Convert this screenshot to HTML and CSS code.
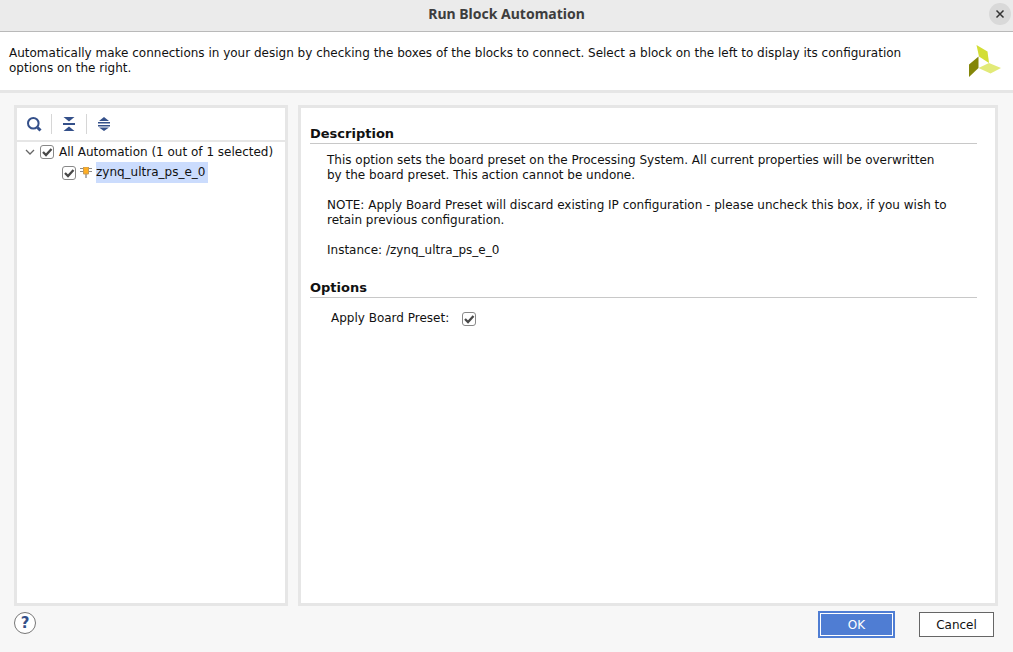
FILE: index.html
```html
<!DOCTYPE html>
<html lang="en">
<head>
<meta charset="utf-8">
<title>Run Block Automation</title>
<link rel="stylesheet" href="styles.css">
</head>
<body>
<div class="dialog">
  <header class="titlebar">
    <h1 class="title">Run Block Automation</h1>
    <button class="close" type="button" aria-label="Close">
      <svg width="10" height="10" viewBox="0 0 10 10"><path d="M1.5 1.5 8.5 8.5M8.5 1.5 1.5 8.5" fill="none" stroke="#333" stroke-width="1.5"/></svg>
    </button>
  </header>
  <section class="intro">
    <p class="intro-text">Automatically make connections in your design by checking the boxes of the blocks to connect. Select a block on the left to display its configuration options on the right.</p>
    <svg class="logo" width="32" height="32" viewBox="0 0 32 32" aria-hidden="true">
      <path d="M7.500 0 18.500 6.500 20 18 10 11.500Z" fill="#d3de35"/>
      <path d="M9.500 11.500V23L0 32V19.500Z" fill="#848609"/>
      <path d="M9.500 23 20 18 32 23 21.500 28.500Z" fill="#e2ea78"/>
    </svg>
  </section>
  <main class="content">
    <aside class="panel tree-panel">
      <div class="toolbar">
        <button class="tool" type="button" aria-label="Search">
          <svg width="16" height="16" viewBox="0 0 16 16"><circle cx="7.300" cy="7.300" r="5.300" fill="none" stroke="#34508a" stroke-width="2"/><path d="M11.500 11.500 14.500 14.500" stroke="#34508a" stroke-width="3"/></svg>
        </button>
        <button class="tool" type="button" aria-label="Collapse all">
          <svg width="16" height="16" viewBox="0 0 16 16"><path d="M2.500 1H13.500L8 5.500ZM2 7H14V9H2ZM8 10.500 13.500 15H2.500Z" fill="#34508a"/></svg>
        </button>
        <button class="tool" type="button" aria-label="Expand all">
          <svg width="16" height="16" viewBox="0 0 16 16"><path d="M8 1 13 5H3ZM2 6H14V7.500H2ZM2 9H14V10.500H2ZM3 11.500H13L8 15Z" fill="#34508a"/></svg>
        </button>
      </div>
      <div class="tree">
        <div class="node">
          <svg class="chevron" width="10" height="8" viewBox="0 0 10 8"><path d="M1 2 5 6 9 2" fill="none" stroke="#666" stroke-width="1.300"/></svg>
          <input class="check" type="checkbox" id="all" checked>
          <label for="all">All Automation (1 out of 1 selected)</label>
        </div>
        <div class="node child">
          <input class="check" type="checkbox" id="zynq" checked>
          <svg class="block" width="12" height="12" viewBox="0 0 12 12"><path d="M0 1.500H12M0 4.500H12" stroke="#8c8c8c" stroke-width="1" fill="none"/><path d="M6 7V11" stroke="#b0b0b0" stroke-width="2"/><path d="M3.500 0H8.500V7H3.500Z" fill="#ffae22" stroke="#c99b52" stroke-width="1"/></svg>
          <label class="selected" for="zynq">zynq_ultra_ps_e_0</label>
        </div>
      </div>
    </aside>
    <section class="panel detail">
      <h2 class="heading">Description</h2>
      <div class="description">
        <p>This option sets the board preset on the Processing System. All current properties will be overwritten by the board preset. This action cannot be undone.</p>
        <p>NOTE: Apply Board Preset will discard existing IP configuration - please uncheck this box, if you wish to retain previous configuration.</p>
        <p>Instance: /zynq_ultra_ps_e_0</p>
      </div>
      <h2 class="heading">Options</h2>
      <div class="option">
        <label for="preset">Apply Board Preset:</label>
        <input class="check" type="checkbox" id="preset" checked>
      </div>
    </section>
  </main>
  <footer class="footer">
    <button class="help" type="button" aria-label="Help">?</button>
    <div class="actions">
      <button class="btn primary" type="button">OK</button>
      <button class="btn" type="button">Cancel</button>
    </div>
  </footer>
</div>
</body>
</html>
```
FILE: styles.css
```css
* { box-sizing: border-box; }
body {
  margin: 0;
  background: #f7f7f7;
  color: #111;
  font: 12px/15px "DejaVu Sans", sans-serif;
}
h1, h2, p { margin: 0; }
button { font: inherit; color: inherit; padding: 0; cursor: pointer; }
svg { display: block; flex: none; }

.dialog { display: flex; flex-direction: column; min-height: 100vh; }

.titlebar {
  display: grid;
  grid-template-columns: 1fr auto 1fr;
  align-items: center;
  height: 32px;
  padding: 0 2px 4px;
  background: #ebebeb;
  border-bottom: 1px solid #b9b9b9;
}
.title {
  grid-column: 2;
  color: #3d3d3d;
  font: bold 14px/20px "Noto Sans", sans-serif;
}
.close {
  display: grid;
  place-items: center;
  justify-self: end;
  width: 22px;
  height: 22px;
  border: 0;
  border-radius: 50%;
  background: #d9d9d9;
}

.intro {
  display: flex;
  justify-content: space-between;
  align-items: center;
  gap: 20px;
  padding: 13px 12px;
  background: #fff;
  border-bottom: 3px solid #e6e6e6;
  padding-left: 9px;
}
.intro-text { max-width: 930px; }

.content {
  display: flex;
  flex: 1;
  gap: 10px;
  padding: 12px 15px 0 14px;
}
.panel { background: #fff; border: 3px solid #e6e6e6; }
.tree-panel { flex: none; width: 274px; }
.toolbar {
  display: flex;
  align-items: center;
  height: 34px;
  border-bottom: 2px solid #e6e6e6;
}
.tool {
  display: grid;
  place-items: center;
  width: 35px;
  height: 20px;
  border: 0 solid #d6d6d6;
  border-right-width: 1px;
  background: none;
}
.tool:last-child { border-color: transparent; }
.node {
  display: flex;
  align-items: center;
  height: 21px;
  padding-left: 8px;
  white-space: nowrap;
}
.node:first-child { height: 20px; }
.chevron { margin-right: 5px; }
.child { padding-left: 45px; }
.check {
  appearance: none;
  flex: none;
  width: 14px;
  height: 14px;
  margin: 0 5px 0 0;
  border: 1px solid #888;
  border-radius: 3px;
  background: #fff url("data:image/svg+xml,%3Csvg xmlns='http://www.w3.org/2000/svg' viewBox='0 0 12 12'%3E%3Cpath d='M2 6 5 9 10.500 3' fill='none' stroke='%23484848' stroke-width='2.300'/%3E%3C/svg%3E") center / 12px 12px no-repeat;
}
.child .check { margin-right: 4px; }
.block { margin-right: 4px; }
.selected { padding: 3px 3px 3px 0; background: #cbdcfd; }

.detail { flex: 1; min-width: 0; padding: 17px 18px 0 9px; }
.heading {
  padding: 1px 0 2px;
  border-bottom: 1px solid #c8c8c8;
  font-size: 13px;
  line-height: 15px;
}
.description {
  display: grid;
  gap: 15px;
  padding: 9px 28px 21px 17px;
}
.option {
  display: flex;
  align-items: center;
  gap: 13px;
  padding: 13px 0 0 21px;
}

.footer {
  display: flex;
  justify-content: space-between;
  align-items: flex-start;
  padding: 5px 19px 14px 14px;
}
.help {
  width: 22px;
  height: 22px;
  margin-top: 1px;
  border: 1px solid #777;
  border-radius: 50%;
  background: #fff;
  color: #34508a;
  font-weight: bold;
  font-size: 15px;
}
.actions { display: flex; align-items: center; gap: 24px; }
.btn {
  width: 75px;
  height: 25px;
  padding-top: 1px;
  border: 1px solid #666;
  background: #fff;
}
.primary {
  width: 77px;
  height: 27px;
  border: 2px solid #4f7dd3;
  background: #4f7dd3;
  box-shadow: inset 0 0 0 1px #fff;
  color: #fff;
}
```
